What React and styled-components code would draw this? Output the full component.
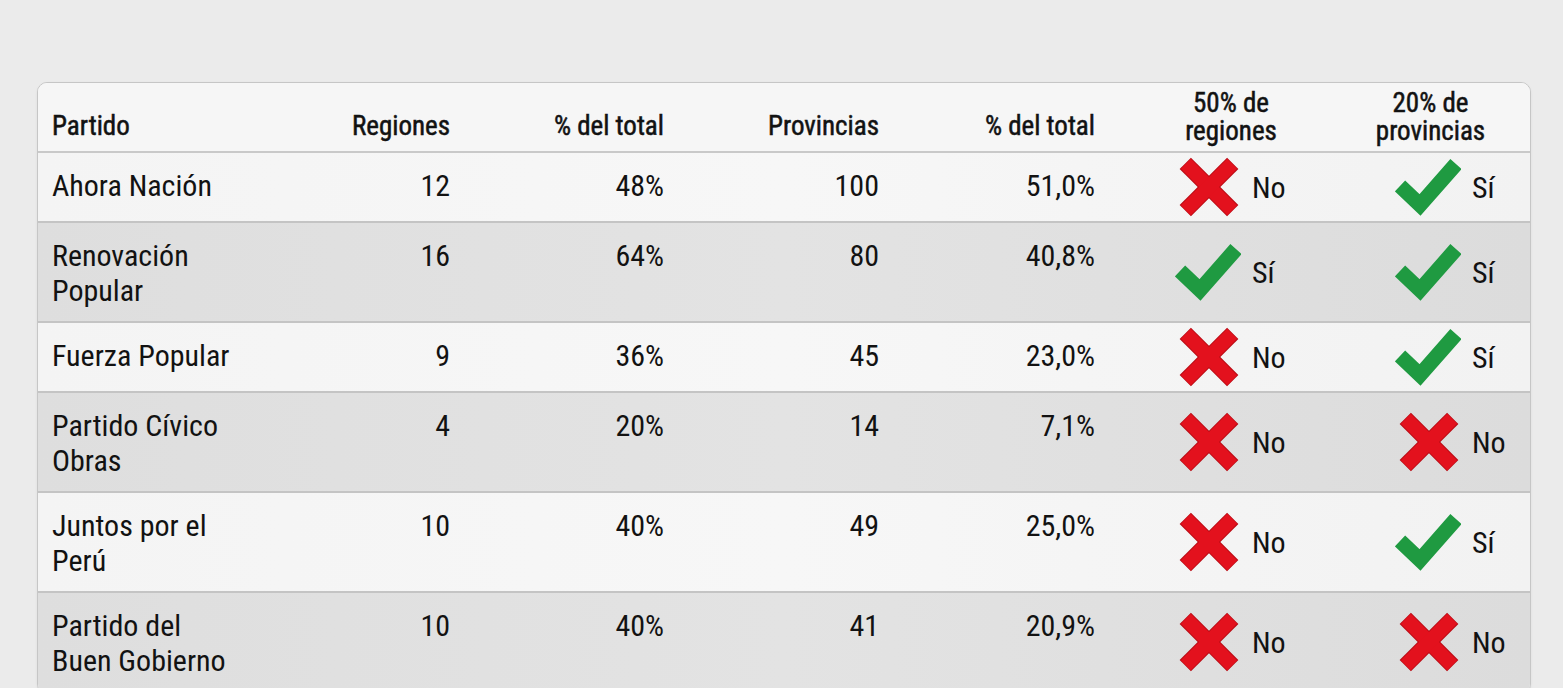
import React from 'react';
import styled, { createGlobalStyle } from 'styled-components';

const Global = createGlobalStyle`
  body {
    margin: 0;
    background: #ebebeb;
    font-family: "Roboto Condensed", "Roboto", "Liberation Sans", sans-serif;
    color: #121212;
  }
`;

const COLS = '213px 213px 214px 215px 238px 200px 1fr';

const Page = styled.div`
  padding: 82px 32px 40px 37px;
`;

const Card = styled.div`
  background: #f5f5f5;
  border: 1px solid #c6c6c6;
  border-radius: 10px;
  overflow: hidden;
  box-shadow: 0 1px 3px rgba(0, 0, 0, 0.06);
`;

const HeaderRow = styled.div`
  display: grid;
  grid-template-columns: ${COLS};
  height: 68px;
  border-bottom: 2px solid #c9c9c9;
  background: #f6f6f6;
`;

const HeaderCell = styled.div`
  align-self: end;
  font-size: 27px;
  font-weight: 400;
  -webkit-text-stroke: 0.5px #121212;
  line-height: 28px;
  text-align: ${p => p.$align || 'left'};
  padding: 0 ${p => p.$right || 0}px ${p => (p.$multi ? 6 : 11)}px ${p => p.$left || 0}px;
`;

const HeaderLine = styled.div`
  white-space: nowrap;
`;

const Row = styled.div`
  display: grid;
  grid-template-columns: ${COLS};
  min-height: 68px;
  background: ${p => (p.$shade ? 'linear-gradient(90deg, #dedede, #e3e3e3 50%, #dcdcdc)' : 'linear-gradient(90deg, #f4f4f4, #f7f7f7 50%, #f2f2f2)')};
  border-bottom: 2px solid #c4c4c4;
`;

const Cell = styled.div`
  font-size: 30px;
  line-height: 35px;
  padding: 15px ${p => p.$right || 0}px 13px ${p => p.$left || 0}px;
  text-align: ${p => p.$align || 'left'};
  white-space: nowrap;
`;

const StatusCell = styled.div`
  align-self: center;
  display: flex;
  align-items: center;
  gap: 11px;
  padding-left: ${p => p.$indent}px;
`;

const StatusLabel = styled.span`
  font-size: 30px;
  line-height: 35px;
`;

const Cross = () => (
  <svg width="66" height="60" viewBox="0 0 66 60">
    <g strokeLinecap="butt">
      <line x1="10.3" y1="6.3" x2="57.7" y2="53.7" stroke="#b80a14" strokeWidth="16" />
      <line x1="57.7" y1="6.3" x2="10.3" y2="53.7" stroke="#b80a14" strokeWidth="16" />
      <line x1="10.8" y1="6.8" x2="57.2" y2="53.2" stroke="#e3111d" strokeWidth="14" />
      <line x1="57.2" y1="6.8" x2="10.8" y2="53.2" stroke="#e3111d" strokeWidth="14" />
    </g>
  </svg>
);

const Check = () => (
  <svg width="66" height="60" viewBox="0 0 66 60">
    <polyline
      points="5,29 25,48 61,7"
      fill="none"
      stroke="#1f9a41"
      strokeWidth="15"
      strokeLinejoin="miter"
      strokeLinecap="butt"
    />
  </svg>
);

const Status = ({ ok, indent }) => (
  <StatusCell $indent={indent}>
    {ok ? <Check /> : <Cross />}
    <StatusLabel>{ok ? 'Sí' : 'No'}</StatusLabel>
  </StatusCell>
);

const parties = [
  { name: ['Ahora Nación'], reg: '12', regPct: '48%', prov: '100', provPct: '51,0%', r: false, p: true },
  { name: ['Renovación', 'Popular'], reg: '16', regPct: '64%', prov: '80', provPct: '40,8%', r: true, p: true },
  { name: ['Fuerza Popular'], reg: '9', regPct: '36%', prov: '45', provPct: '23,0%', r: false, p: true },
  { name: ['Partido Cívico', 'Obras'], reg: '4', regPct: '20%', prov: '14', provPct: '7,1%', r: false, p: false },
  { name: ['Juntos por el', 'Perú'], reg: '10', regPct: '40%', prov: '49', provPct: '25,0%', r: false, p: true },
  { name: ['Partido del', 'Buen Gobierno'], reg: '10', regPct: '40%', prov: '41', provPct: '20,9%', r: false, p: false },
];

export default function App() {
  return (
    <Page>
      <Global />
      <Card>
        <HeaderRow>
          <HeaderCell $left={14}>Partido</HeaderCell>
          <HeaderCell $align="right" $right={14}>Regiones</HeaderCell>
          <HeaderCell $align="right" $right={14}>% del total</HeaderCell>
          <HeaderCell $align="right" $right={14}>Provincias</HeaderCell>
          <HeaderCell $align="right" $right={36}>% del total</HeaderCell>
          <HeaderCell $align="center" $multi>
            <HeaderLine>50% de</HeaderLine>
            <HeaderLine>regiones</HeaderLine>
          </HeaderCell>
          <HeaderCell $align="center" $multi>
            <HeaderLine>20% de</HeaderLine>
            <HeaderLine>provincias</HeaderLine>
          </HeaderCell>
        </HeaderRow>
        {parties.map((row, i) => (
          <Row key={row.name.join(' ')} $shade={i % 2 === 1}>
            <Cell $left={14}>
              {row.name.map(line => (
                <div key={line}>{line}</div>
              ))}
            </Cell>
            <Cell $align="right" $right={14}>{row.reg}</Cell>
            <Cell $align="right" $right={14}>{row.regPct}</Cell>
            <Cell $align="right" $right={14}>{row.prov}</Cell>
            <Cell $align="right" $right={36}>{row.provPct}</Cell>
            <Status ok={row.r} indent={44} />
            <Status ok={row.p} indent={64} />
          </Row>
        ))}
      </Card>
    </Page>
  );
}
